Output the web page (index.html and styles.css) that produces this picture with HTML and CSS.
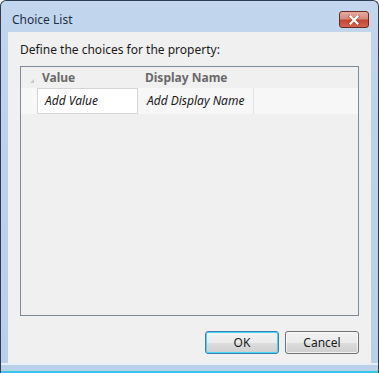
FILE: index.html
```html
<!DOCTYPE html>
<html>
<head>
<meta charset="utf-8">
<link rel="stylesheet" href="styles.css">
</head>
<body>
<div class="window">
  <div class="titlebar">
    <span class="title">Choice List</span>
    <div class="close">
      <svg width="14" height="10" viewBox="0 0 14 10"><path d="M3 1.5 L11 8.5 M11 1.5 L3 8.5" stroke="#5a1a10" stroke-width="3.2" stroke-linecap="square" opacity="0.35"/><path d="M3.5 1.5 L10.5 8.5 M10.5 1.5 L3.5 8.5" stroke="#ffffff" stroke-width="2.2" stroke-linecap="square"/></svg>
    </div>
  </div>
  <div class="client">
    <div class="label">Define the choices for the property:</div>
    <div class="grid">
      <div class="header">
        <span class="sort"></span>
        <span class="hcell hvalue">Value</span>
        <span class="hcell hname">Display Name</span>
      </div>
      <div class="row">
        <span class="lead"></span>
        <span class="cell cvalue">Add Value</span>
        <span class="cell cname">Add Display Name</span>
        <span class="rest"></span>
      </div>
    </div>
    <div class="buttons">
      <button class="btn ok">OK</button>
      <button class="btn">Cancel</button>
    </div>
  </div>
  <div class="bottomframe"></div>
</div>
</body>
</html>
```

FILE: styles.css
```css
html, body {
  margin: 0;
  padding: 0;
  background: #ffffff;
}
body {
  font-family: "Noto Sans", "Open Sans", sans-serif;
  font-size: 12px;
}
.window {
  width: 379px;
  height: 373px;
  box-sizing: border-box;
  background: linear-gradient(to bottom, #c2d7ed 0%, #bcd2ea 40%, #b9d0e9 100%);
  border: 1px solid #2d3e52;
  border-bottom: none;
  border-radius: 6px 6px 0 0;
  display: flex;
  flex-direction: column;
  overflow: hidden;
}
.titlebar {
  height: 31px;
  display: flex;
  align-items: flex-start;
  justify-content: space-between;
  padding: 0 9px 0 11px;
  box-sizing: border-box;
  flex: none;
}
.title {
  margin-top: 11px;
  font-family: "Noto Sans", sans-serif;
  font-size: 12px;
  line-height: 16px;
  color: #1e2e44;
}
.close {
  margin-top: 10px;
  width: 30px;
  height: 17px;
  box-sizing: border-box;
  border: 1px solid #6b2b22;
  border-radius: 3px;
  background: linear-gradient(to bottom, #e8aaa0 0%, #d88a7c 45%, #c9452f 55%, #d3654f 100%);
  display: flex;
  align-items: center;
  justify-content: center;
}
.close svg {
  display: block;
}
.client {
  margin: 0 7px;
  height: 331px;
  flex: none;
  background: #f0f0f0;
  padding: 10px 12px 0 12px;
  box-sizing: border-box;
  display: flex;
  flex-direction: column;
}
.label {
  height: 16px;
  line-height: 16px;
  color: #1a1a1a;
  font-size: 12px;
}
.grid {
  margin-top: 8px;
  height: 250px;
  box-sizing: border-box;
  border: 1px solid #7d8a9a;
  background: #f0f0f0;
  flex: none;
}
.header {
  height: 21px;
  display: flex;
  align-items: center;
}
.sort {
  width: 0;
  height: 0;
  border-left: 4px solid transparent;
  border-bottom: 4px solid #c8c8c8;
  margin-left: 9px;
  margin-top: 6px;
}
.hcell {
  font-weight: bold;
  color: #6a6a6a;
  font-size: 12px;
}
.hvalue {
  margin-left: 8px;
  width: 103px;
}
.row {
  height: 26px;
  display: flex;
  background: #f7f7f7;
}
.lead {
  width: 16px;
  flex: none;
}
.cell {
  font-style: italic;
  color: #1a1a1a;
  font-size: 12px;
  line-height: 24px;
  box-sizing: border-box;
}
.cvalue {
  width: 101px;
  background: #ffffff;
  border: 1px solid #d6d6d6;
  padding-left: 7px;
}
.cname {
  width: 116px;
  padding-left: 9px;
  border-right: 1px solid #e4e4e4;
  line-height: 26px;
}
.rest {
  flex: 1;
}
.buttons {
  margin-top: 15px;
  display: flex;
  justify-content: flex-end;
  gap: 6px;
}
.btn {
  width: 74px;
  height: 23px;
  box-sizing: border-box;
  border: 1px solid #707070;
  border-radius: 3px;
  background: linear-gradient(to bottom, #f2f2f2 0%, #ebebeb 50%, #dddddd 51%, #cfcfcf 100%);
  font-family: "Noto Sans", sans-serif;
  font-size: 12px;
  color: #1a1a1a;
  padding: 0;
  box-shadow: inset 0 0 0 1px rgba(255,255,255,0.7);
}
.ok {
  border-color: #3c7fb1;
  box-shadow: inset 0 0 0 1px #48d6f6;
}
.bottomframe {
  flex: 1;
  border-top: 2px solid #e6eef7;
  border-bottom: 2px solid #35c6e8;
}
```
